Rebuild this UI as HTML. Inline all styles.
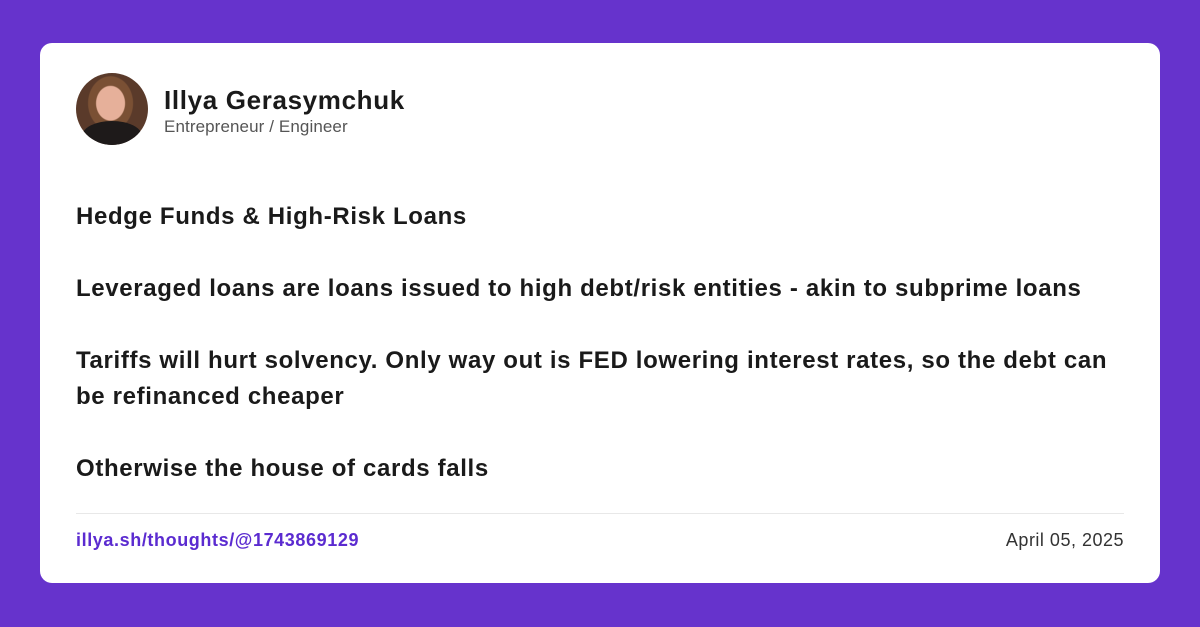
<!DOCTYPE html>
<html><head><style>
body{margin:0;width:1200px;height:627px;background:#6633cc;font-family:"Liberation Sans",sans-serif;overflow:hidden;position:relative}
.card{position:absolute;left:40px;top:43px;width:1120px;height:540px;background:#fff;border-radius:12px}
.av{position:absolute;left:76px;top:73px;width:72px;height:72px;border-radius:50%;background:radial-gradient(ellipse 15px 18px at 48% 42%,#e6b09a 0 14px,#7a5034 15px 22px,#5a3a2a 23px);overflow:hidden}
.av:after{content:"";position:absolute;left:6px;top:48px;width:60px;height:30px;border-radius:50% 50% 0 0;background:#1e1a1a}
.name{position:absolute;left:164px;top:85px;font-size:26px;font-weight:bold;color:#1a1a1a;letter-spacing:0.65px}
.sub{position:absolute;left:164px;top:117px;font-size:17px;color:#555;letter-spacing:0.1px}
.body{position:absolute;left:76px;top:199px;font-size:24px;line-height:36px;color:#1a1a1a;width:1050px;font-weight:bold;letter-spacing:0.65px}
.body p{margin:0 0 36px}
.hr{position:absolute;left:76px;top:513px;width:1048px;height:1px;background:#e8e8e8}
.link{position:absolute;left:76px;top:530px;font-size:18px;color:#5b2bd0;font-weight:bold;letter-spacing:0.6px}
.date{position:absolute;right:76px;top:530px;font-size:18px;color:#333;letter-spacing:0.5px}
</style></head><body>
<div class="card"></div>
<div class="av"></div>
<div class="name">Illya Gerasymchuk</div>
<div class="sub">Entrepreneur / Engineer</div>
<div class="body"><p>Hedge Funds &amp; High-Risk Loans</p><p>Leveraged loans are loans issued to high debt/risk entities - akin to subprime loans</p><p>Tariffs will hurt solvency. Only way out is FED lowering interest rates, so the debt can be refinanced cheaper</p><p>Otherwise the house of cards falls</p></div>
<div class="hr"></div>
<div class="link">illya.sh/thoughts/@1743869129</div>
<div class="date">April 05, 2025</div>
</body></html>
